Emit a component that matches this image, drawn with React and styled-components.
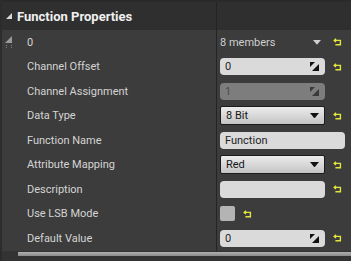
import React from "react";
import styled, { createGlobalStyle } from "styled-components";

const GlobalStyle = createGlobalStyle`
  html, body {
    margin: 0;
    padding: 0;
    background: #333333;
  }
  * {
    box-sizing: border-box;
  }
`;

const Panel = styled.div`
  width: 351px;
  height: 261px;
  display: flex;
  flex-direction: column;
  background: #3c3c3c;
  font-family: Roboto, "Liberation Sans", sans-serif;
  overflow: hidden;
  border-left: 2px solid #2c2c2c;
`;

const Header = styled.div`
  height: 30px;
  display: grid;
  grid-template-columns: 215px 1fr;
  background: #2f2f2f;
  border-top: 2px solid #2a2a2a;
  .title {
    display: flex;
    align-items: center;
    gap: 5px;
    padding-left: 4px;
    border-right: 1px solid #242424;
    color: #f0f0f0;
    font-size: 13px;
    font-weight: 700;
  }
`;

const Row = styled.div`
  height: 24.5px;
  display: grid;
  grid-template-columns: 215px 1fr;
`;

const NameCell = styled.div`
  display: flex;
  align-items: center;
  padding-left: ${(p) => (p.$expander ? "3px" : "25px")};
  gap: 12px;
  border-right: 1px solid #242424;
  color: #d4d4d4;
  font-size: 11px;
`;

const ValueCell = styled.div`
  display: flex;
  align-items: center;
  padding-left: 3px;
  gap: 8px;
`;

const Members = styled.div`
  width: 105px;
  display: flex;
  align-items: center;
  justify-content: space-between;
  padding-right: 4px;
  color: #cfcfcf;
  font-size: 11px;
`;

const NumBox = styled.div`
  width: 105px;
  height: 17px;
  display: flex;
  align-items: center;
  justify-content: space-between;
  padding: 0 6px 0 5px;
  border-radius: 4px;
  background: ${(p) => (p.$disabled ? "#7d7d7d" : "#dadada")};
  color: ${(p) => (p.$disabled ? "#4c4c4c" : "#1e1e1e")};
  font-size: 11px;
`;

const TextBox = styled.div`
  width: ${(p) => p.$width || 105}px;
  height: 17px;
  display: flex;
  align-items: center;
  padding: 0 5px;
  border-radius: 4px;
  background: #dadada;
  color: #1e1e1e;
  font-size: 11px;
`;

const Combo = styled.div`
  width: 105px;
  height: 19px;
  display: flex;
  align-items: center;
  justify-content: space-between;
  padding: 0 5px 0 5px;
  border: 1px solid #1c1c1c;
  border-radius: 2px;
  background: linear-gradient(#ececec, #c4c4c4);
  color: #161616;
  font-size: 11px;
`;

const Check = styled.div`
  width: 15px;
  height: 15px;
  border-radius: 2px;
  background: #b4b4b4;
`;

const Footer = styled.div`
  flex: 1;
  display: flex;
  flex-direction: column;
  padding-top: 1.5px;
  padding-left: 16px;
  background: #333333;
  .bar {
    height: 4px;
    background: linear-gradient(#b0b0b0, #8a8a8a);
  }
`;

const Reset = () => (
  <svg width="9" height="8" viewBox="0 0 9 8">
    <path
      d="M3 0.8 L1.2 2.4 L3 4 M1.4 2.4 H7.4 V6.8 H2.4"
      fill="none"
      stroke="#e4e43c"
      strokeWidth="1.4"
    />
  </svg>
);

const Spin = ({ color = "#111" }) => (
  <svg width="9" height="9" viewBox="0 0 9 9">
    <path d="M0 0 H5 L0 5 Z" fill={color} />
    <path d="M9 2 V9 H2 Z" fill={color} />
  </svg>
);

const Down = ({ color = "#111", size = 9 }) => (
  <svg width={size} height={size * 0.6} viewBox="0 0 10 6">
    <path d="M0 0 H10 L5 6 Z" fill={color} />
  </svg>
);

const Corner = ({ color, size }) => (
  <svg width={size} height={size} viewBox="0 0 8 8">
    <path d="M8 0 V8 H0 Z" fill={color} />
  </svg>
);

const Expander = styled.div`
  width: 10px;
  display: flex;
  flex-direction: column;
  align-items: flex-start;
  gap: 2px;
  .grip {
    width: 6px;
    height: 3px;
    border-left: 1px dotted #808080;
    border-right: 1px dotted #808080;
    margin-left: 1px;
  }
`;

const props = [
  { name: "Channel Offset", kind: "num", value: "0" },
  { name: "Channel Assignment", kind: "num", value: "1", disabled: true },
  { name: "Data Type", kind: "combo", value: "8 Bit" },
  { name: "Function Name", kind: "text", value: "Function", width: 125 },
  { name: "Attribute Mapping", kind: "combo", value: "Red" },
  { name: "Description", kind: "text", value: "", reset: true },
  { name: "Use LSB Mode", kind: "check" },
  { name: "Default Value", kind: "num", value: "0" },
];

function Value({ p }) {
  if (p.kind === "num") {
    return (
      <ValueCell>
        <NumBox $disabled={p.disabled}>
          <span>{p.value}</span>
          <Spin color={p.disabled ? "#3a3a3a" : "#111"} />
        </NumBox>
        {!p.disabled && <Reset />}
      </ValueCell>
    );
  }
  if (p.kind === "combo") {
    return (
      <ValueCell>
        <Combo>
          <span>{p.value}</span>
          <Down />
        </Combo>
        <Reset />
      </ValueCell>
    );
  }
  if (p.kind === "text") {
    return (
      <ValueCell>
        <TextBox $width={p.width}>{p.value}</TextBox>
        {p.reset && <Reset />}
      </ValueCell>
    );
  }
  return (
    <ValueCell>
      <Check />
      <Reset />
    </ValueCell>
  );
}

export default function App() {
  return (
    <>
      <GlobalStyle />
      <Panel>
        <Header>
          <div className="title">
            <Corner color="#d8d8d8" size={6} />
            Function Properties
          </div>
          <div />
        </Header>
        <Row>
          <NameCell $expander>
            <Expander>
              <Corner color="#9a9a9a" size={7} />
              <div className="grip" />
            </Expander>
            0
          </NameCell>
          <ValueCell>
            <Members>
              8 members
              <Down color="#cfcfcf" size={8} />
            </Members>
            <Reset />
          </ValueCell>
        </Row>
        {props.map((p) => (
          <Row key={p.name}>
            <NameCell>{p.name}</NameCell>
            <Value p={p} />
          </Row>
        ))}
        <Footer>
          <div className="bar" />
        </Footer>
      </Panel>
    </>
  );
}
